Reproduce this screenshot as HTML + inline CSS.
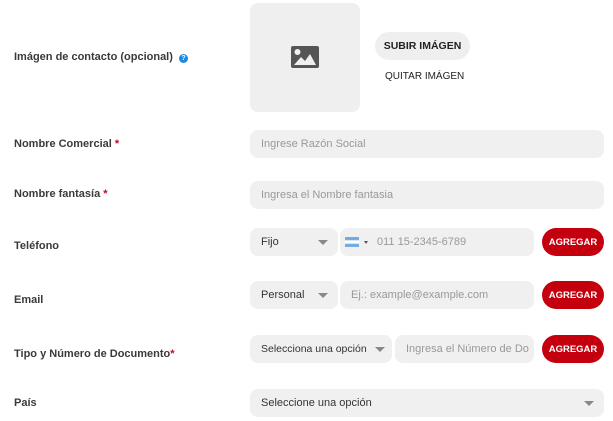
<!DOCTYPE html>
<html><head><meta charset="utf-8"><style>
*{box-sizing:border-box;margin:0;padding:0}
body{width:613px;height:421px;background:#fff;font-family:"Liberation Sans",sans-serif;position:relative;overflow:hidden;color:#333}
.l{position:absolute;left:14px;font-size:11px;font-weight:bold;color:#3a3a3a}
.r{color:#d0021b;font-size:11px}
.f{position:absolute;background:#f0f0f0;border-radius:8px;height:28px;font-size:11px;line-height:28px;padding-left:11px;color:#999;white-space:nowrap}
.s{color:#333}
.c{position:absolute;right:10px;top:12px;width:0;height:0;border-left:5px solid transparent;border-right:5px solid transparent;border-top:5px solid #888}
.b{position:absolute;left:542px;width:62px;height:28px;border-radius:14px;background:#c4000f;color:#fff;font-size:9.5px;font-weight:bold;display:flex;align-items:center;justify-content:center;padding-top:1px;white-space:nowrap}
</style></head><body>
<div class="l" style="top:51px">Imágen de contacto (opcional) <span style="display:inline-block;width:9px;height:9px;border-radius:50%;background:#1e88e5;color:#fff;font-size:7px;text-align:center;line-height:9px;margin-left:3px">?</span></div>
<div style="position:absolute;left:250px;top:3px;width:110px;height:109px;background:#efefef;border-radius:8px"></div>
<svg style="position:absolute;left:291px;top:46px" width="28" height="22" viewBox="0 0 28 22"><rect width="28" height="22" rx="2" fill="#555"/><circle cx="6.5" cy="6" r="3" fill="#efefef"/><path d="M3 19 L10 11 L14 15 L19 8 L25 19Z" fill="#efefef"/></svg>
<div style="position:absolute;left:375px;top:32px;width:95px;height:28px;border-radius:14px;background:#efefef;font-size:10.5px;font-weight:bold;text-align:center;line-height:28px;color:#222">SUBIR IMÁGEN</div>
<div style="position:absolute;left:385px;top:71px;font-size:10px;color:#222">QUITAR IMÁGEN</div>
<div class="l" style="top:138px">Nombre Comercial <span class="r">*</span></div>
<div class="f" style="left:250px;top:130px;width:354px">Ingrese Razón Social</div>
<div class="l" style="top:188px">Nombre fantasía <span class="r">*</span></div>
<div class="f" style="left:250px;top:181px;width:354px">Ingresa el Nombre fantasia</div>
<div class="l" style="top:240px">Teléfono</div>
<div class="f s" style="left:250px;top:228px;width:88px">Fijo<span class="c"></span></div>
<div class="f" style="left:340px;top:228px;width:194px;padding-left:37px">011 15-2345-6789</div>
<svg style="position:absolute;left:345px;top:237px" width="14" height="10"><rect width="14" height="10" fill="#74acdf"/><rect y="3.3" width="14" height="3.4" fill="#fff"/></svg>
<div style="position:absolute;left:364px;top:241px;border-left:2.5px solid transparent;border-right:2.5px solid transparent;border-top:3px solid #555"></div>
<div class="b" style="top:228px">AGREGAR</div>
<div class="l" style="top:294px">Email</div>
<div class="f s" style="left:250px;top:281px;width:88px">Personal<span class="c"></span></div>
<div class="f" style="left:340px;top:281px;width:194px">Ej.: example@example.com</div>
<div class="b" style="top:281px">AGREGAR</div>
<div class="l" style="top:348px">Tipo y Número de Documento<span class="r">*</span></div>
<div class="f s" style="left:250px;top:335px;width:142px;font-size:10.5px">Selecciona una opción<span class="c" style="right:7px"></span></div>
<div class="f" style="left:395px;top:335px;width:139px;overflow:hidden">Ingresa el Número de Do</div>
<div class="b" style="top:335px">AGREGAR</div>
<div class="l" style="top:397px">País</div>
<div class="f s" style="left:250px;top:389px;width:354px">Seleccione una opción<span class="c"></span></div>
</body></html>
